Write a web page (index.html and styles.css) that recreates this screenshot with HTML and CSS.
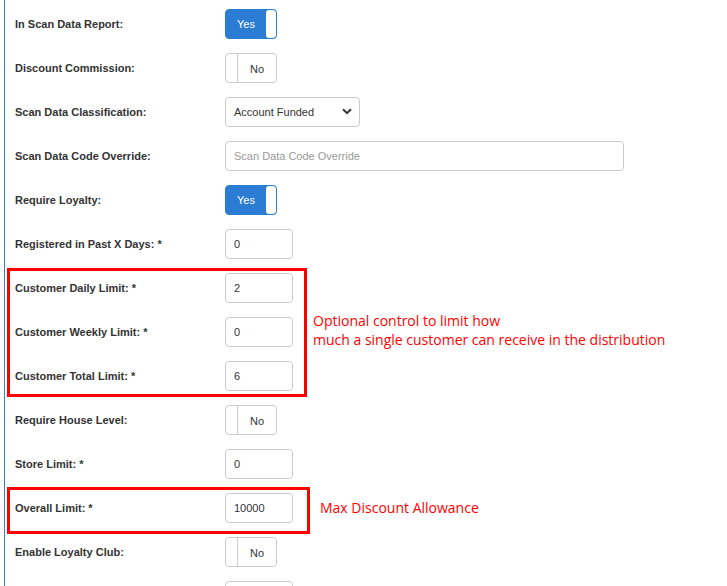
FILE: index.html
```html
<!DOCTYPE html>
<html>
<head>
<meta charset="utf-8">
<link rel="stylesheet" href="styles.css">
</head>
<body>
<div class="page">
  <form class="form">
    <div class="row"><label class="lbl">In Scan Data Report:</label><div class="toggle on"><span class="tx">Yes</span><span class="knob"></span></div></div>
    <div class="row"><label class="lbl">Discount Commission:</label><div class="toggle off"><span class="knob"></span><span class="tx">No</span></div></div>
    <div class="row"><label class="lbl">Scan Data Classification:</label><div class="select"><span>Account Funded</span><svg width="10" height="7" viewBox="0 0 10 7"><path d="M1 1.2 L5 5.2 L9 1.2" fill="none" stroke="#333" stroke-width="2"/></svg></div></div>
    <div class="row"><label class="lbl">Scan Data Code Override:</label><div class="input wide placeholder">Scan Data Code Override</div></div>
    <div class="row"><label class="lbl">Require Loyalty:</label><div class="toggle on"><span class="tx">Yes</span><span class="knob"></span></div></div>
    <div class="row"><label class="lbl">Registered in Past X Days: *</label><div class="input">0</div></div>
    <div class="row"><label class="lbl">Customer Daily Limit: *</label><div class="input">2</div></div>
    <div class="row"><label class="lbl">Customer Weekly Limit: *</label><div class="input">0</div></div>
    <div class="row"><label class="lbl">Customer Total Limit: *</label><div class="input">6</div></div>
    <div class="row"><label class="lbl">Require House Level:</label><div class="toggle off"><span class="knob"></span><span class="tx">No</span></div></div>
    <div class="row"><label class="lbl">Store Limit: *</label><div class="input">0</div></div>
    <div class="row"><label class="lbl">Overall Limit: *</label><div class="input">10000</div></div>
    <div class="row"><label class="lbl">Enable Loyalty Club:</label><div class="toggle off"><span class="knob"></span><span class="tx">No</span></div></div>
    <div class="row"><label class="lbl"></label><div class="input"></div></div>
  </form>
  <div class="box box1"></div>
  <div class="note note1">Optional control to limit how<br>much a single customer can receive in the distribution</div>
  <div class="box box2"></div>
  <div class="note note2">Max Discount Allowance</div>
</div>
</body>
</html>
```
FILE: styles.css
```css
html, body { margin: 0; padding: 0; background: #fff; overflow: hidden; }
body { width: 727px; height: 586px; font-family: "Liberation Sans", Arial, sans-serif; color: #333; }
.page {
  position: relative;
  margin-left: 4px;
  border-left: 1px solid #2f80d8;
  height: 586px;
  box-sizing: border-box;
  padding-top: 9px;
}
.form { display: flex; flex-direction: column; gap: 14px; }
.row { display: flex; align-items: center; height: 30px; }
.lbl {
  width: 210px;
  padding-left: 10px;
  font-size: 11px;
  font-weight: bold;
  color: #333;
  margin-top: -1px;
}
.toggle {
  width: 52px; height: 30px; box-sizing: border-box;
  border: 1px solid #ccc; border-radius: 4px;
  display: flex; overflow: hidden;
  font-size: 11px;
}
.toggle .tx { flex: 1; display: flex; align-items: center; justify-content: center; }
.toggle.on { background: #2b7cd3; border-color: #2b7cd3; color: #fff; }
.toggle.on .knob { width: 10px; background: #fff; border-radius: 3px; }
.toggle.off { background: #fff; color: #333; }
.toggle.off .knob { width: 11px; border-right: 1px solid #ccc; }
.toggle.off .tx { padding-top: 1px; }
.select {
  width: 135px; height: 30px; box-sizing: border-box;
  border: 1px solid #ccc; border-radius: 4px;
  display: flex; align-items: center; justify-content: space-between;
  padding: 0 7px 0 8px; font-size: 11px; color: #333;
}
.select svg { margin-top: -1px; }
.input {
  width: 68px; height: 30px; box-sizing: border-box;
  border: 1px solid #ccc; border-radius: 4px;
  display: flex; align-items: center;
  padding: 0 8px; font-size: 11px; color: #333;
}
.input.wide { width: 399px; }
.placeholder { color: #999; }
.box { position: absolute; border: 3px solid #f00; box-sizing: border-box; }
.box1 { left: 2px; top: 268px; width: 300px; height: 129px; }
.box2 { left: 2px; top: 487px; width: 303px; height: 47px; }
.note {
  position: absolute; color: #f00;
  font-family: "Open Sans", sans-serif; font-size: 14px; line-height: 19px;
}
.note1 { left: 308px; top: 311px; }
.note2 { left: 315px; top: 498px; }
```
